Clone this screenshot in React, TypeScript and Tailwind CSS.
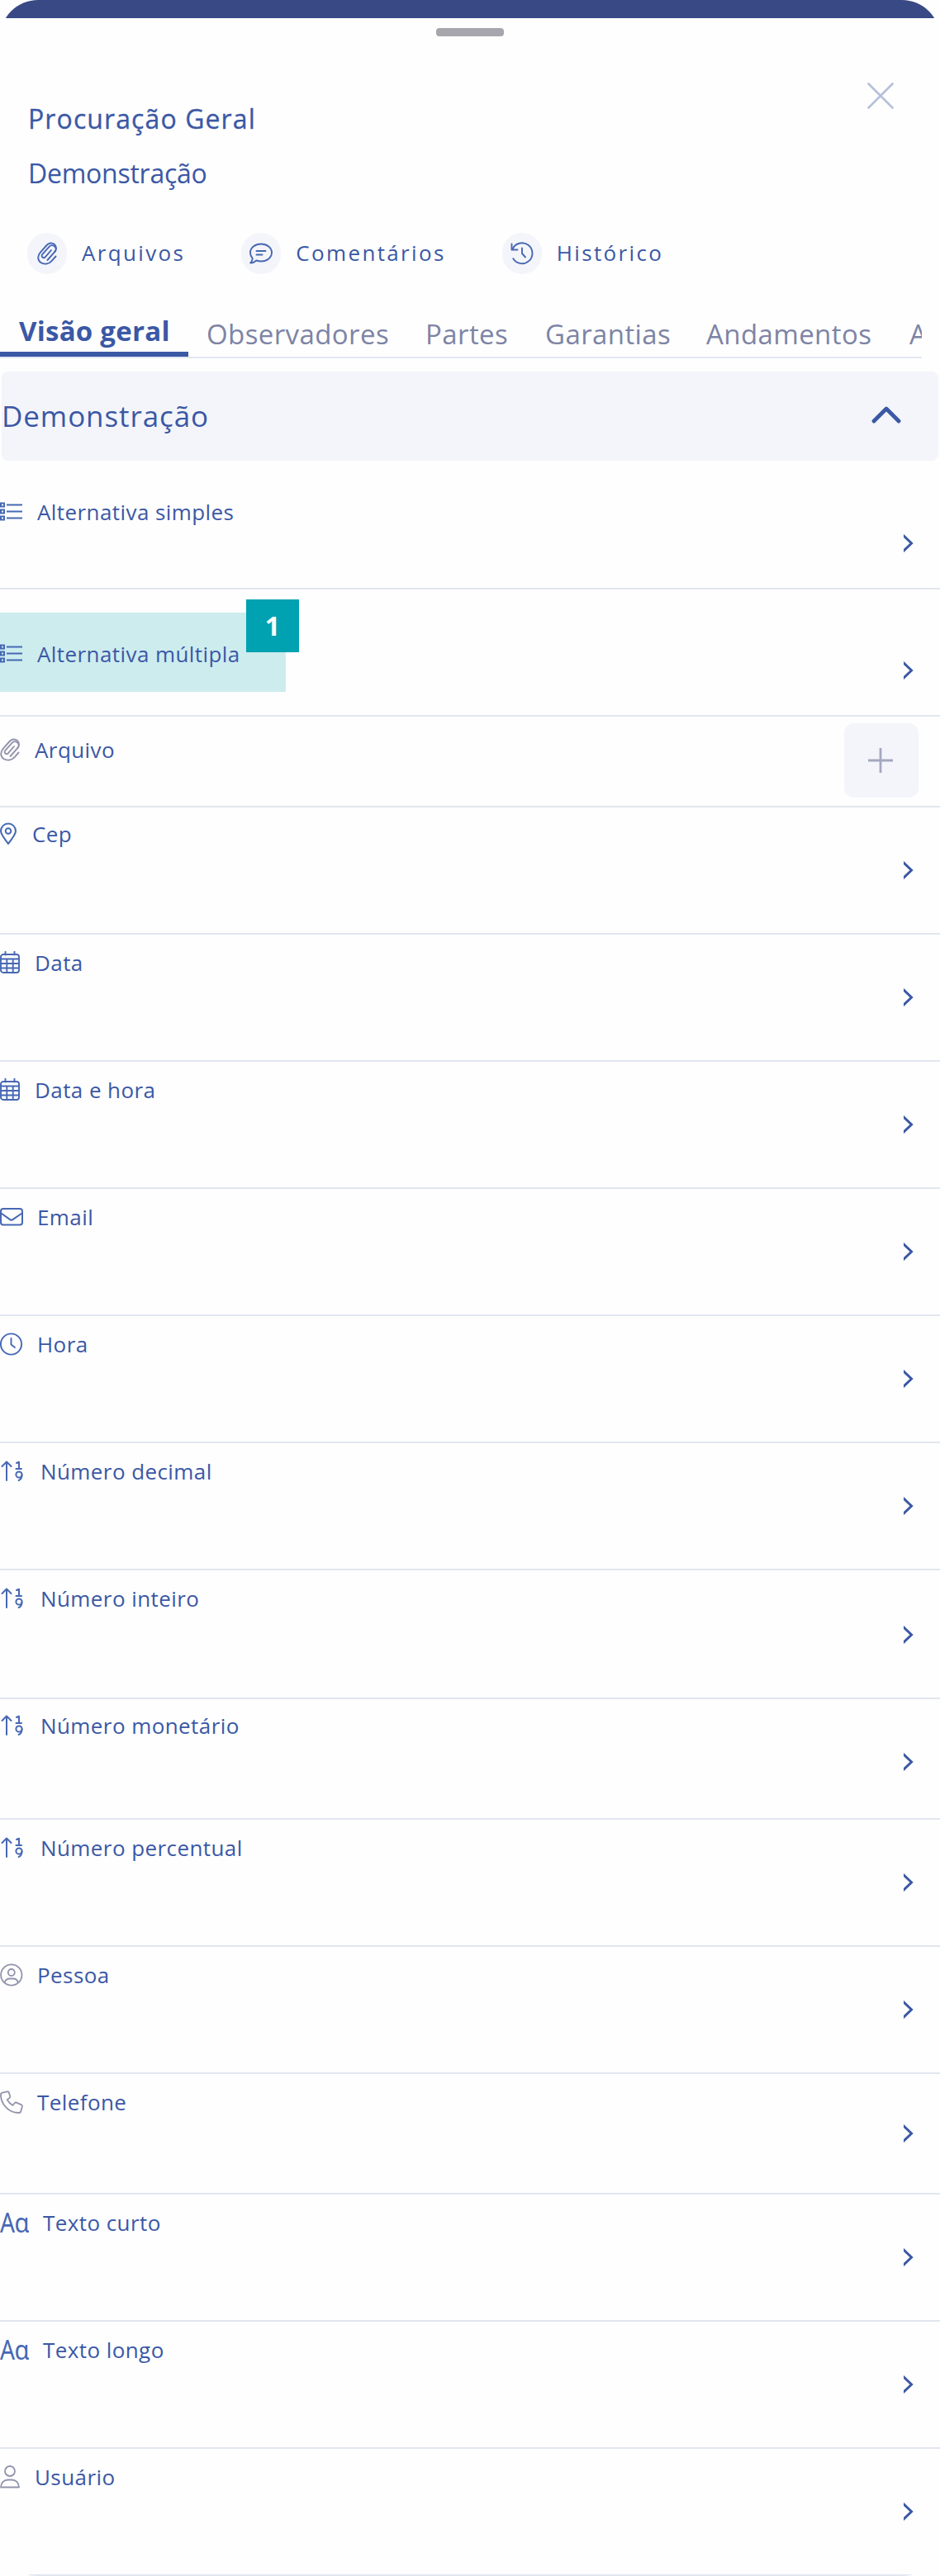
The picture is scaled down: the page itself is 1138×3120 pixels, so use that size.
import React from "react"

const IconList = () => (
  <svg width="28" height="28" viewBox="0 0 28 28" fill="none" stroke="currentColor" strokeWidth="2">
    <rect x="1" y="3.5" width="4" height="4" strokeWidth="2" />
    <rect x="1" y="11.5" width="4" height="4" strokeWidth="2" />
    <rect x="1" y="19.5" width="4" height="4" strokeWidth="2" />
    <path d="M8 5.500h19M8 13.500h19M8 21.500h19" />
  </svg>
)

const IconPaperclip = () => (
  <svg width="25" height="28" viewBox="0 0 25 28" fill="none" stroke="currentColor" strokeWidth="1.9" strokeLinecap="round" strokeLinejoin="round">
    <path d="M17 10L9.800 18.300a2.400 2.400 0 0 1-3.600-3.200L14.500 5.800a4.600 4.600 0 0 1 6.900 6.100L12.500 22" />
    <path d="M22.500 17.500l-4.700 5.300c-3.600 4.200-9.500 5-13.500 2.200-4-3-4-8.300-.6-12.200L11.500 4c2.400-2.700 6.400-3.400 9.200-1.200 2.800 2.300 3 6 .7 9.100" />
  </svg>
)

const IconPin = () => (
  <svg width="22" height="28" viewBox="0 0 22 28" fill="none" stroke="currentColor" strokeWidth="2" strokeLinejoin="round">
    <path d="M10 26C7 21.500 1 15 1 10.500a9 9 0 0 1 18 0C19 15 13 21.500 10 26z" />
    <circle cx="10" cy="10.500" r="3.300" />
  </svg>
)

const IconCalendar = () => (
  <svg width="25" height="28" viewBox="0 0 25 28" fill="none" stroke="currentColor" strokeWidth="1.9">
    <rect x="1" y="4" width="22" height="22" rx="3" />
    <path d="M6.500 0.500v4M17.500 0.500v4" strokeLinecap="round" />
    <path d="M1 9.500h22M1 15h22M1 20.500h22M8.300 9.500V26M15.700 9.500V26" />
  </svg>
)

const IconEnvelope = () => (
  <svg width="28" height="24" viewBox="0 0 28 24" fill="none" stroke="currentColor" strokeWidth="2" strokeLinejoin="round">
    <rect x="1" y="2" width="26" height="19.500" rx="3" />
    <path d="M1.500 7.500l10.300 7.400a3.400 3.400 0 0 0 4 0L26.500 7.500" />
  </svg>
)

const IconClock = () => (
  <svg width="28" height="28" viewBox="0 0 28 28" fill="none" stroke="currentColor" strokeWidth="1.9" strokeLinecap="round" strokeLinejoin="round">
    <circle cx="13.500" cy="14" r="12.600" />
    <path d="M13.500 7v7.500l4.500 3.500" />
  </svg>
)

const IconNumber = () => (
  <svg width="32" height="28" viewBox="0 0 32 28" fill="none" stroke="currentColor" strokeWidth="2" strokeLinecap="round" strokeLinejoin="round">
    <path d="M8 25V3M2.500 8L8 2.500 13.500 8" />
    <path d="M20 4l3-1.200v8M19.500 11h6.500" />
    <circle cx="23" cy="18" r="3.600" />
    <path d="M26.500 18.500c0 3-1.500 5.500-3.800 6.500" />
  </svg>
)

const IconCircleUser = () => (
  <svg width="28" height="28" viewBox="0 0 28 28" fill="none" stroke="currentColor" strokeWidth="1.8">
    <circle cx="13.800" cy="14" r="12.700" />
    <circle cx="13.800" cy="11" r="4" />
    <path d="M5.600 23.500c.8-3.400 3.200-5 6-5H16c2.800 0 5.200 1.600 6 5" />
  </svg>
)

const IconPhone = () => (
  <svg width="28" height="28" viewBox="0 0 28 28" fill="none" stroke="currentColor" strokeWidth="1.8" strokeLinejoin="round">
    <path d="M8.700 1.300L3 2.700A2.500 2.500 0 0 0 1 5.200C1 17 11 27 22.800 27a2.500 2.500 0 0 0 2.500-2l1.500-5.600a2 2 0 0 0-1.200-2.300l-5.700-2.400a2 2 0 0 0-2.300.6l-2.200 2.700C11.600 15.900 9.900 13.500 8.700 11.200l2.900-2.300a2 2 0 0 0 .5-2.300L10.800 2.400a1.900 1.900 0 0 0-2.100-1.100z" />
  </svg>
)

const IconText = () => (
  <svg width="35" height="28" viewBox="0 0 35 28" fill="currentColor" className="font-['Noto_Sans',sans-serif] text-[33px] font-normal">
    <text x="0" y="25.500" textLength="18" lengthAdjust="spacingAndGlyphs">A</text>
    <text x="17.500" y="25.500" textLength="18" lengthAdjust="spacingAndGlyphs">ɑ</text>
  </svg>
)

const IconUser = () => (
  <svg width="25" height="30" viewBox="0 0 25 30" fill="none" stroke="currentColor" strokeWidth="1.8" strokeLinejoin="round">
    <circle cx="12" cy="8" r="6" />
    <path d="M1 27.500C1 22 5 18.500 9.800 18.500h4.400C19 18.500 23 22 23 27.500z" />
  </svg>
)

const IconComment = () => (
  <svg width="28" height="28" viewBox="0 0 28 28" fill="none" stroke="currentColor" strokeWidth="1.9" strokeLinecap="round" strokeLinejoin="round">
    <path d="M14 2.500c7.200 0 13 4.700 13 10.500s-5.800 10.500-13 10.500c-2 0-3.900-.4-5.600-1-1.700 1.600-4.200 3-7.200 3 1.300-1.400 2.300-3.300 2.600-5.300C2.100 18.300 1 15.800 1 13 1 7.200 6.800 2.500 14 2.500z" />
    <path d="M8.500 11h11M8.500 15.500h7" />
  </svg>
)

const IconHistory = () => (
  <svg width="28" height="28" viewBox="0 0 28 28" fill="none" stroke="currentColor" strokeWidth="1.9" strokeLinecap="round" strokeLinejoin="round">
    <path d="M1.500 2.500v7h7" />
    <path d="M2.500 8.800a12.500 12.500 0 1 1 .8 11.500" />
    <path d="M14 7.500v6.500l4 4.500" />
  </svg>
)

type Field = {
  name: string
  icon: React.ReactNode
  row: string
  chevron?: string
  muted?: boolean
  marker?: string
}

const fields: Field[] = [
  { name: "Alternativa simples", icon: <IconList />, row: "h-[156px] pt-[44px]", chevron: "mt-[45px]" },
  { name: "Alternativa múltipla", icon: <IconList />, row: "h-[154px] pt-[60px]", chevron: "mt-[27px]", marker: "1" },
  { name: "Arquivo", icon: <IconPaperclip />, row: "h-[110px] pt-[22px]", muted: true },
  { name: "Cep", icon: <IconPin />, row: "h-[154px] pt-[14px]", chevron: "mt-[51px]" },
  { name: "Data", icon: <IconCalendar />, row: "h-[154px] pt-4", chevron: "mt-[49px]" },
  { name: "Data e hora", icon: <IconCalendar />, row: "h-[154px] pt-4", chevron: "mt-[49px]" },
  { name: "Email", icon: <IconEnvelope />, row: "h-[154px] pt-4", chevron: "mt-[49px]" },
  { name: "Hora", icon: <IconClock />, row: "h-[154px] pt-4", chevron: "mt-[49px]" },
  { name: "Número decimal", icon: <IconNumber />, row: "h-[154px] pt-4", chevron: "mt-[49px]" },
  { name: "Número inteiro", icon: <IconNumber />, row: "h-[156px] pt-4", chevron: "mt-[51px]" },
  { name: "Número monetário", icon: <IconNumber />, row: "h-[146px] pt-[14px]", chevron: "mt-[51px]" },
  { name: "Número percentual", icon: <IconNumber />, row: "h-[154px] pt-4", chevron: "mt-[49px]" },
  { name: "Pessoa", icon: <IconCircleUser />, row: "h-[154px] pt-4", chevron: "mt-[49px]", muted: true },
  { name: "Telefone", icon: <IconPhone />, row: "h-[146px] pt-4", chevron: "mt-[45px]", muted: true },
  { name: "Texto curto", icon: <IconText />, row: "h-[154px] pt-4", chevron: "mt-[49px]" },
  { name: "Texto longo", icon: <IconText />, row: "h-[154px] pt-4", chevron: "mt-[49px]" },
  { name: "Usuário", icon: <IconUser />, row: "h-[154px] pt-4", chevron: "mt-[49px]", muted: true }
]

const actions = [
  { name: "Arquivos", icon: <IconPaperclip /> },
  { name: "Comentários", icon: <IconComment /> },
  { name: "Histórico", icon: <IconHistory /> }
]

const tabs = [
  { name: "Observadores", width: "w-[265px]" },
  { name: "Partes", width: "w-[145px]" },
  { name: "Garantias", width: "w-[195px]" },
  { name: "Andamentos", width: "w-[246px]" },
  { name: "A", width: "w-[60px]" }
]

const FieldRow: React.FC<Field> = ({ name, icon, row, chevron, muted, marker }) => {
  return (
    <li className={`relative flex items-start justify-between border-b-2 border-[#e2e6f0] ${row}`}>
      {marker && (
        <>
          <div className="absolute left-0 top-[28px] w-[346px] h-[96px] bg-[#cdecee]" />
          <div className="absolute left-[298px] top-[12px] w-16 h-16 flex items-center justify-center bg-[#00a1b0] text-white text-[32px] font-bold">
            {marker}
          </div>
        </>
      )}
      <div className="relative flex items-center gap-[17px] h-9">
        <span className={muted ? "text-[#9294ac]" : "text-[#4768b3]"}>{icon}</span>
        <span className="text-[26px] leading-9 tracking-[0.42px] whitespace-nowrap">{name}</span>
      </div>
      {chevron ? (
        <svg className={`mr-8 shrink-0 ${chevron}`} width="12" height="22" viewBox="0 0 12 22" fill="none" stroke="currentColor" strokeWidth="3">
          <path d="M-1 1l10.500 10L-1 21" />
        </svg>
      ) : (
        <button className="flex items-center justify-center w-[90px] h-[90px] pr-0.5 -mt-[14px] mr-[26px] rounded-xl bg-[#f4f5fa] text-[#a3a8bf]">
          <svg width="30" height="30" viewBox="0 0 30 30" fill="none" stroke="currentColor" strokeWidth="2.800">
            <path d="M15 0v30M0 15h30" />
          </svg>
        </button>
      )}
    </li>
  )
}

const App: React.FC = () => {
  return (
    <div className="w-[1138px] h-[3120px] bg-[#fefefe]">
      <div className="w-full h-full rounded-[46px] overflow-hidden font-['Open_Sans',sans-serif] text-[#3b58a5]">
        <div className="h-[22px] bg-[#394985]" />
        <div className="flex justify-center pt-3">
          <div className="w-[82px] h-[10px] rounded bg-[#a6a6ac]" />
        </div>
        <header className="flex justify-between pl-[34px] pr-[56px] h-[238px]">
          <div className="pt-20">
            <h1 className="text-[32px] leading-10 tracking-[1.1px] [-webkit-text-stroke:0.3px_#3b58a5]">Procuração Geral</h1>
            <p className="mt-[26px] text-[32px] leading-10 tracking-[-0.25px]">Demonstração</p>
          </div>
          <svg className="mt-14" width="32" height="32" viewBox="0 0 32 32" fill="none" stroke="#b5c0da" strokeWidth="2.600" strokeLinecap="round">
            <path d="M1.500 1.500l29 29M30.500 1.500l-29 29" />
          </svg>
        </header>
        <div className="flex gap-[68px] pl-[33px]">
          {actions.map(({ name, icon }) => (
            <div key={name} className="flex items-center gap-[18px]">
              <span className="flex items-center justify-center w-12 h-[50px] rounded-full bg-[#f4f5fa] text-[#4768b3]">{icon}</span>
              <span className="pb-0.5 text-[26px] leading-9 tracking-[2.35px]">{name}</span>
            </div>
          ))}
        </div>
        <nav className="flex w-[1116px] h-[54px] mt-12 overflow-hidden whitespace-nowrap border-b-2 border-[#e2e6f0] text-[33px] leading-10">
          <div className="shrink-0 w-[228px] h-[52px] pl-[23px] pt-px border-b-[6px] border-[#3b58a5] font-bold tracking-[0.25px]">Visão geral</div>
          {tabs.map(({ name, width }) => (
            <div key={name} className={`shrink-0 pl-[22px] pt-[5px] tracking-[0.4px] text-[#7d84a5] ${width}`}>
              {name}
            </div>
          ))}
        </nav>
        <div className="flex items-center justify-between h-[108px] mx-0.5 mt-4 pr-[45px] rounded-lg bg-[#f4f5fa]">
          <h2 className="text-[35px] tracking-[0.9px]">Demonstração</h2>
          <svg className="mb-1" width="36" height="22" viewBox="0 0 36 22" fill="none" stroke="currentColor" strokeWidth="4.800" strokeLinecap="round" strokeLinejoin="round">
            <path d="M3 19L18 4l15 15" />
          </svg>
        </div>
        <ul>
          {fields.map((field) => (
            <FieldRow key={field.name} {...field} />
          ))}
        </ul>
      </div>
    </div>
  )
}
export default App
